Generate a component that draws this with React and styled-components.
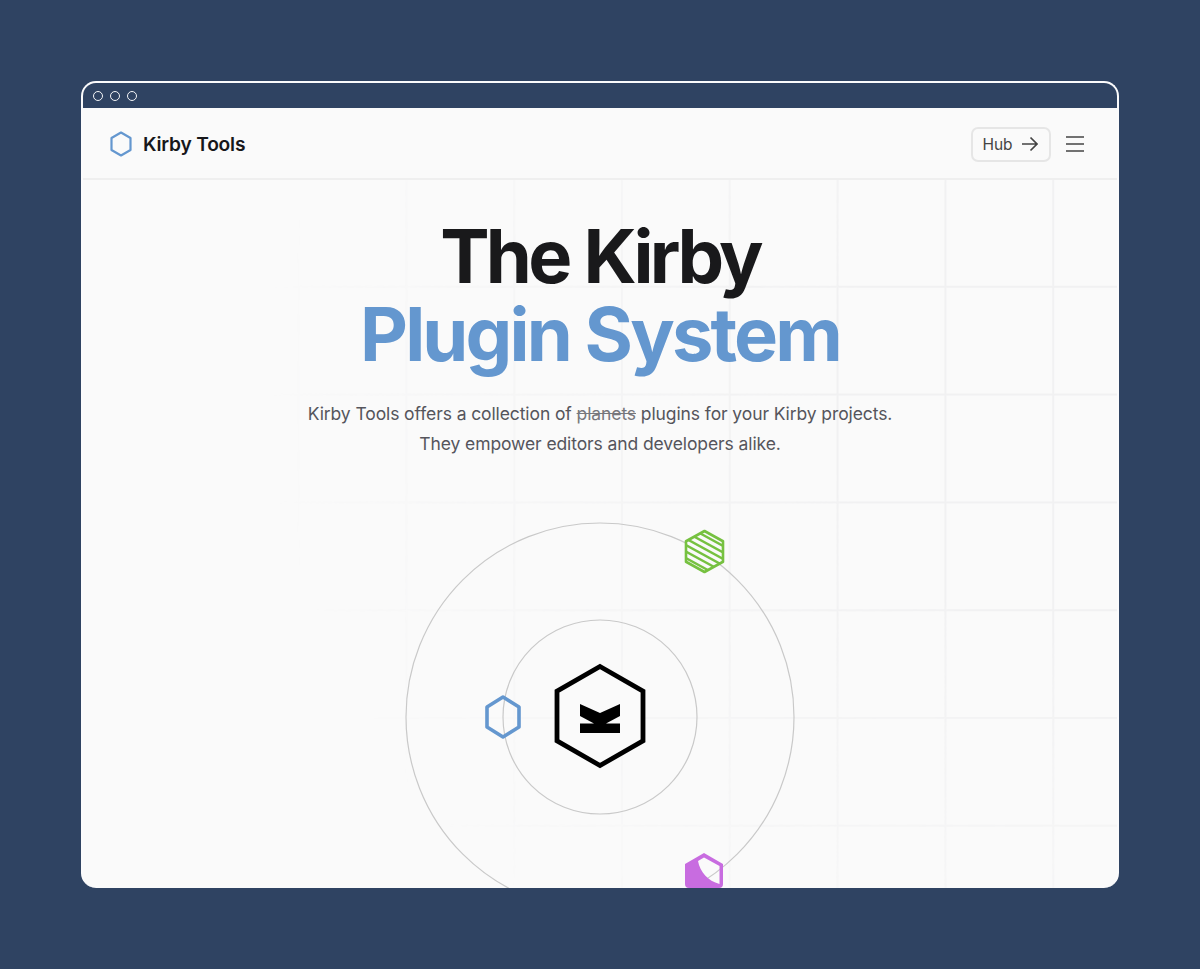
import React from "react";
import styled, { createGlobalStyle } from "styled-components";

const Global = createGlobalStyle`
  html, body { margin: 0; padding: 0; background: #2f4362; }
  #root { width: 1200px; height: 969px; }
  * { box-sizing: border-box; }
`;

const Page = styled.div`
  width: 1200px;
  height: 969px;
  padding: 81px 81px;
  background: #2f4362;
  font-family: Inter, "Noto Sans", sans-serif;
`;

const Frame = styled.div`
  height: 807px;
  display: flex;
  flex-direction: column;
  border-radius: 15px;
  overflow: hidden;
  border: 2px solid #fbfbfc;
  border-bottom-width: 0;
  background: #fafafa;
`;

const Chrome = styled.div`
  flex: 0 0 25px;
  display: flex;
  align-items: center;
  gap: 7px;
  padding: 0 0 0 10px;
  background: #2f4362;
`;

const Dot = styled.span`
  width: 10px;
  height: 10px;
  border-radius: 50%;
  border: 1.75px solid #f4f5f7;
`;

const Header = styled.header`
  flex: 0 0 72px;
  display: flex;
  align-items: center;
  justify-content: space-between;
  padding: 2px 33px 0 26px;
  border-bottom: 2px solid #efefef;
  background: #fafafa;
`;

const Brand = styled.div`
  display: flex;
  align-items: center;
  gap: 10px;
  font-size: 19.2px;
  font-weight: 600;
  letter-spacing: -0.2px;
  color: #17171a;
`;

const Actions = styled.div`
  display: flex;
  align-items: center;
  gap: 15px;
`;

const HubButton = styled.button`
  width: 80px;
  height: 35px;
  display: flex;
  align-items: center;
  justify-content: center;
  gap: 8px;
  padding: 0 2px 0 0;
  border: 2px solid #e6e6e6;
  border-radius: 7px;
  background: #fafafa;
  color: #444;
  font: 400 15.5px Inter, sans-serif;
`;

const Main = styled.main`
  position: relative;
  flex: 1;
  min-height: 0;
  display: flex;
  flex-direction: column;
  align-items: center;
`;

const Grid = styled.div`
  position: absolute;
  inset: 0;
  background-image:
    linear-gradient(to right, #f1f1f2 1.5px, transparent 1.5px),
    linear-gradient(to bottom, #f1f1f2 1.5px, transparent 1.5px);
  background-size: 107.8px 107.8px;
  background-position: -1px -2px;
  -webkit-mask-image: radial-gradient(ellipse 950px 800px at 100% 30%, #000 30%, transparent 90%);
  mask-image: radial-gradient(ellipse 950px 800px at 100% 30%, #000 30%, transparent 90%);
`;

const Title = styled.h1`
  position: relative;
  margin: 37px 0 0;
  text-align: center;
  font-size: 74px;
  line-height: 78px;
  font-weight: 700;
  letter-spacing: -3.7px;
  word-spacing: 1px;
  color: #19191b;
`;

const Accent = styled.span`
  display: block;
  letter-spacing: -2.85px;
  word-spacing: 0;
  color: #6497cf;
`;

const Lead = styled.p`
  position: relative;
  margin: 26px 0 0;
  text-align: center;
  font-size: 17.5px;
  line-height: 30px;
  font-weight: 400;
  letter-spacing: -0.1px;
  color: #55555c;
`;

const Struck = styled.s`
  color: #77777c;
`;

const Orbit = styled.svg`
  position: relative;
  margin-top: 51px;
  flex: none;
  display: block;
`;

const hex = (cx, cy, rx, ry) =>
  [[0, -ry], [rx, -ry / 2], [rx, ry / 2], [0, ry], [-rx, ry / 2], [-rx, -ry / 2]]
    .map(([x, y]) => `${cx + x},${cy + y}`)
    .join(" ");

const GREEN = hex(704.5, 551.5, 18.5, 20.5);

const Diagram = () => (
  <Orbit width="420" height="400" viewBox="390 510 420 400">
    <g fill="none" stroke="#c9c9c9" strokeWidth="1.2">
      <circle cx="600" cy="717" r="194" />
      <circle cx="600" cy="717" r="97" />
    </g>
    <polygon points={hex(600, 716, 43, 49.5)} fill="#fafafa" stroke="#000" strokeWidth="4.8" />
    <path d="M580 704 L600 713 L620 704 V716 L606 723.5 H620 V733 H580 V723.5 H594 L580 716 Z" fill="#000" />
    <polygon points={hex(503, 717, 16, 20)} fill="none" stroke="#6497cf" strokeWidth="3.6" strokeLinejoin="round" />
    <g>
      <clipPath id="greenhex"><polygon points={GREEN} /></clipPath>
      <polygon points={GREEN} fill="#fafafa" />
      <g clipPath="url(#greenhex)" stroke="#76c140" strokeWidth="2.3">
        {[-18, -11.5, -5, 1.5, 8, 14.5, 21, 27.5].map((o) => (
          <line key={o} x1="684" y1={536 + o} x2="726" y2={536 + o + 23} />
        ))}
      </g>
      <polygon points={GREEN} fill="none" stroke="#76c140" strokeWidth="2.6" strokeLinejoin="round" />
    </g>
    <path
      fillRule="evenodd"
      d="M704 853 L723 864 V884 Q723 888 719 888 H689 Q685 888 685 884 V864 Z M704 857.5 L698 861 C700 872 708 881 719.5 884 V866 Z"
      fill="#c86ce0"
    />
  </Orbit>
);

export default function App() {
  return (
    <Page>
      <Global />
      <Frame>
        <Chrome>
          <Dot />
          <Dot />
          <Dot />
        </Chrome>
        <Header>
          <Brand>
            <svg width="24" height="26" viewBox="0 0 24 26" fill="none">
              <polygon points="12,1.5 21.5,7 21.5,19 12,24.5 2.5,19 2.5,7" stroke="#6497cf" strokeWidth="2.2" strokeLinejoin="round" />
            </svg>
            Kirby Tools
          </Brand>
          <Actions>
            <HubButton>
              Hub
              <svg width="17" height="16" viewBox="0 0 17 16" fill="none" stroke="currentColor" strokeWidth="1.7">
                <path d="M1 8 H15.5 M9.5 1.5 L16 8 L9.5 14.5" />
              </svg>
            </HubButton>
            <svg width="18" height="16" viewBox="0 0 18 16" fill="none" stroke="#444" strokeWidth="1.7">
              <path d="M0 1 H18 M0 8 H18 M0 15 H18" />
            </svg>
          </Actions>
        </Header>
        <Main>
          <Grid />
          <Title>
            The Kirby
            <Accent>Plugin System</Accent>
          </Title>
          <Lead>
            Kirby Tools offers a collection of <Struck>planets</Struck> plugins for your Kirby projects.
            <br />
            They empower editors and developers alike.
          </Lead>
          <Diagram />
        </Main>
      </Frame>
    </Page>
  );
}
